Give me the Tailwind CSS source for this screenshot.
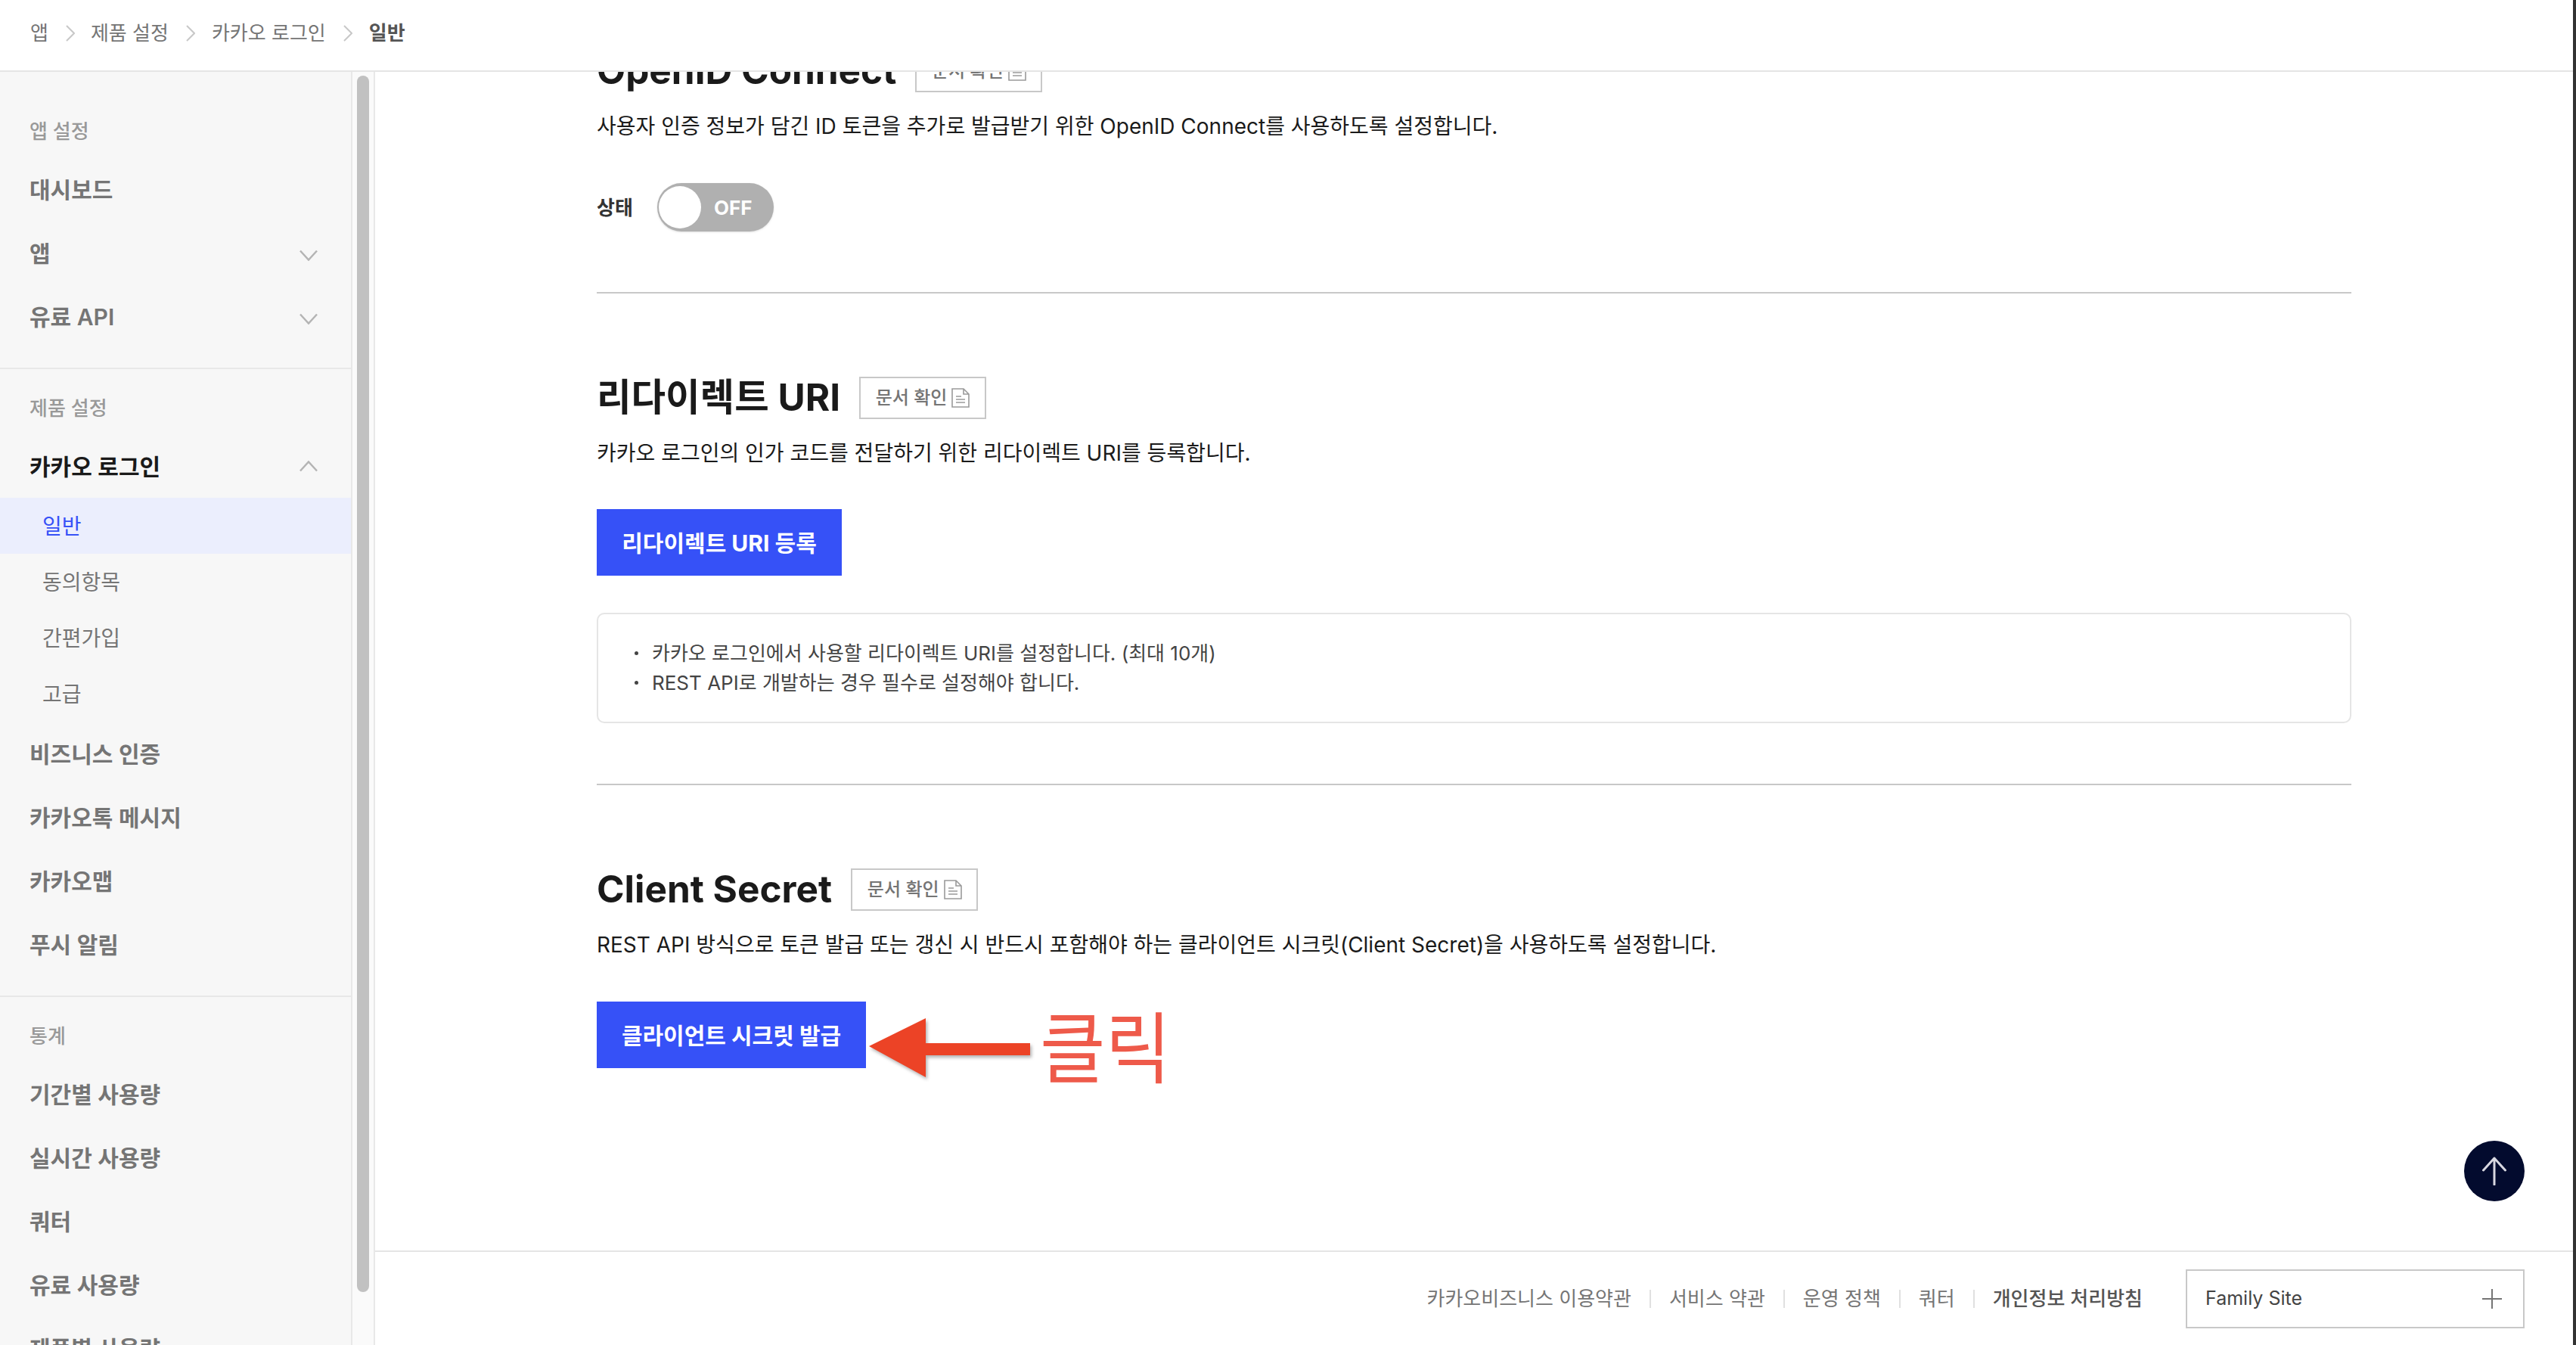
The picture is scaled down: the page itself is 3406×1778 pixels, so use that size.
<!DOCTYPE html>
<html lang="ko">
<head>
  <meta charset="UTF-8">
  <title>카카오 로그인 일반</title>
  <script src="https://cdn.jsdelivr.net/npm/@tailwindcss/browser@4"></script>
</head>
<body class="bg-white">

<div class="w-[3406px] h-[1778px] overflow-hidden flex font-['Inter','Noto_Sans_CJK_KR',sans-serif] text-[#1a1a1a]">
<div class="w-[3402px] h-full flex flex-col">

  <!-- Breadcrumb -->
  <header class="h-[95px] shrink-0 border-b-2 border-[#e5e5e5] flex items-center pl-[40px] pb-[6px] text-[26px] text-[#757575] bg-white relative z-10">
    <span>앱</span>
    <svg class="w-[12px] h-[22px] ml-[23px] mr-[21px]" viewBox="0 0 12 22" fill="none" stroke="#c8c8c8" stroke-width="2"><path d="M1 1l10 10L1 21"/></svg>
    <span>제품 설정</span>
    <svg class="w-[12px] h-[22px] ml-[23px] mr-[22px]" viewBox="0 0 12 22" fill="none" stroke="#c8c8c8" stroke-width="2"><path d="M1 1l10 10L1 21"/></svg>
    <span>카카오 로그인</span>
    <svg class="w-[12px] h-[22px] ml-[23px] mr-[22px]" viewBox="0 0 12 22" fill="none" stroke="#c8c8c8" stroke-width="2"><path d="M1 1l10 10L1 21"/></svg>
    <span class="font-bold text-[#555555]">일반</span>
  </header>

  <div class="flex flex-1 min-h-0">

    <!-- Sidebar -->
    <aside class="w-[464px] shrink-0 bg-[#f7f7f7] overflow-hidden text-[30px] font-semibold text-[#757575]">
      <section class="pt-[57px] pb-[26px] border-b-2 border-[#e8e8e8]">
        <h4 class="h-[40px] pt-[2px] leading-[40px] mb-[16px] pl-[39px] text-[26px] font-medium text-[#999999]">앱 설정</h4>
        <a class="h-[84px] pt-[2px] flex items-center pl-[39px]">대시보드</a>
        <a class="h-[84px] pt-[2px] flex items-center justify-between pl-[39px] pr-[44px]">앱
          <svg class="w-[24px] h-[15px] mt-[4px]" viewBox="0 0 24 15" fill="none" stroke="#b4b4b4" stroke-width="2.5"><path d="M1 1.5l11 12 11-12"/></svg>
        </a>
        <a class="h-[84px] pt-[2px] flex items-center justify-between pl-[39px] pr-[44px]">유료 API
          <svg class="w-[24px] h-[15px] mt-[4px]" viewBox="0 0 24 15" fill="none" stroke="#b4b4b4" stroke-width="2.5"><path d="M1 1.5l11 12 11-12"/></svg>
        </a>
      </section>
      <section class="pt-[30px] pb-[26px] border-b-2 border-[#e8e8e8]">
        <h4 class="h-[40px] pt-[2px] leading-[40px] mb-[16px] pl-[39px] text-[26px] font-medium text-[#999999]">제품 설정</h4>
        <a class="h-[84px] pt-[2px] flex items-center justify-between pl-[39px] pr-[44px] text-[#1a1a1a]">카카오 로그인
          <svg class="w-[24px] h-[15px] -mt-[2px]" viewBox="0 0 24 15" fill="none" stroke="#b4b4b4" stroke-width="2.5"><path d="M1 13.5l11-12 11 12"/></svg>
        </a>
        <ul class="text-[28px] font-normal">
          <li class="h-[74px] pt-[2px] flex items-center pl-[56px] bg-[#ebeefd] text-[#3651f7]">일반</li>
          <li class="h-[74px] pt-[2px] flex items-center pl-[56px]">동의항목</li>
          <li class="h-[74px] pt-[2px] flex items-center pl-[56px]">간편가입</li>
          <li class="h-[74px] pt-[2px] flex items-center pl-[56px]">고급</li>
        </ul>
        <a class="h-[84px] pt-[2px] flex items-center pl-[39px]">비즈니스 인증</a>
        <a class="h-[84px] pt-[2px] flex items-center pl-[39px]">카카오톡 메시지</a>
        <a class="h-[84px] pt-[2px] flex items-center pl-[39px]">카카오맵</a>
        <a class="h-[84px] pt-[2px] flex items-center pl-[39px]">푸시 알림</a>
      </section>
      <section class="pt-[30px]">
        <h4 class="h-[40px] pt-[2px] leading-[40px] mb-[16px] pl-[39px] text-[26px] font-medium text-[#999999]">통계</h4>
        <a class="h-[84px] pt-[2px] flex items-center pl-[39px]">기간별 사용량</a>
        <a class="h-[84px] pt-[2px] flex items-center pl-[39px]">실시간 사용량</a>
        <a class="h-[84px] pt-[2px] flex items-center pl-[39px]">쿼터</a>
        <a class="h-[84px] pt-[2px] flex items-center pl-[39px]">유료 사용량</a>
        <a class="h-[84px] pt-[2px] flex items-center justify-between pl-[39px] pr-[44px]">제품별 사용량
          <svg class="w-[24px] h-[15px] mt-[4px]" viewBox="0 0 24 15" fill="none" stroke="#b4b4b4" stroke-width="2.5"><path d="M1 1.5l11 12 11-12"/></svg>
        </a>
      </section>
    </aside>

    <!-- Sidebar scrollbar -->
    <div class="w-[32px] shrink-0 bg-[#fafafa] border-x-2 border-[#e8e8e8] pl-[6px] pt-[5px]">
      <div class="w-[16px] h-[1608px] rounded-full bg-[#c1c1c1]"></div>
    </div>

    <!-- Main -->
    <main class="flex-1 min-w-0 flex flex-col relative">
      <div class="flex-1 min-h-0 overflow-hidden">
        <div class="w-[2320px] ml-[293px] -mt-[29px]">

          <section class="pb-[80px] border-b-2 border-[#c8c8c8]">
            <div class="flex items-center h-[56px]">
              <h2 class="text-[49.5px] font-bold leading-none">OpenID Connect</h2>
              <a class="ml-[25px] h-[56px] w-[168px] border-2 border-[#c8c8c8] flex items-center justify-center gap-[6px] text-[24px] font-medium text-[#757575]">문서 확인
                <svg class="w-[24px] h-[26px]" viewBox="0 0 24 26" fill="none" stroke="#9a9a9a" stroke-width="1.6"><path d="M1 1h15l7 7v17H1zM16 1v7h7M6 11h7M6 15h12M6 19h12"/></svg>
              </a>
            </div>
            <p class="mt-[25px] text-[28px] leading-[40px]">사용자 인증 정보가 담긴 ID 토큰을 추가로 발급받기 위한 OpenID Connect를 사용하도록 설정합니다.</p>
            <div class="mt-[55px] h-[64px] flex items-center">
              <span class="w-[80px] text-[26px] font-bold text-[#333333]">상태</span>
              <div class="w-[154px] h-[64px] rounded-full bg-[#b0b0b0] flex items-center pl-[2px] shadow-sm">
                <span class="w-[56px] h-[56px] rounded-full bg-white"></span>
                <span class="ml-[17px] text-[26px] font-bold text-white">OFF</span>
              </div>
            </div>
          </section>

          <section class="pt-[110px] pb-[80px] border-b-2 border-[#c8c8c8]">
            <div class="flex items-center h-[56px]">
              <h2 class="text-[49.5px] font-bold leading-none">리다이렉트 URI</h2>
              <a class="ml-[25px] h-[56px] w-[168px] border-2 border-[#c8c8c8] flex items-center justify-center gap-[6px] text-[24px] font-medium text-[#757575]">문서 확인
                <svg class="w-[24px] h-[26px]" viewBox="0 0 24 26" fill="none" stroke="#9a9a9a" stroke-width="1.6"><path d="M1 1h15l7 7v17H1zM16 1v7h7M6 11h7M6 15h12M6 19h12"/></svg>
              </a>
            </div>
            <p class="mt-[25px] text-[28px] leading-[40px]">카카오 로그인의 인가 코드를 전달하기 위한 리다이렉트 URI를 등록합니다.</p>
            <a class="mt-[54px] h-[88px] pt-[2px] w-[324px] bg-[#3651f7] text-white text-[30px] font-bold flex items-center justify-center">리다이렉트 URI 등록</a>
            <ul class="mt-[49px] h-[146px] border-2 border-[#e5e5e5] rounded-[10px] pl-[50px] flex flex-col justify-center text-[26px] leading-[39px] text-[#444444]">
              <li class="relative before:content-[''] before:absolute before:left-[-2px] before:top-[17px] before:w-[5px] before:h-[5px] before:rounded-full before:bg-[#444444] pl-[21px]">카카오 로그인에서 사용할 리다이렉트 URI를 설정합니다. (최대 10개)</li>
              <li class="relative before:content-[''] before:absolute before:left-[-2px] before:top-[17px] before:w-[5px] before:h-[5px] before:rounded-full before:bg-[#444444] pl-[21px]">REST API로 개발하는 경우 필수로 설정해야 합니다.</li>
            </ul>
          </section>

          <section class="pt-[110px]">
            <div class="flex items-center h-[56px]">
              <h2 class="text-[49.5px] font-bold leading-none">Client Secret</h2>
              <a class="ml-[25px] h-[56px] w-[168px] border-2 border-[#c8c8c8] flex items-center justify-center gap-[6px] text-[24px] font-medium text-[#757575]">문서 확인
                <svg class="w-[24px] h-[26px]" viewBox="0 0 24 26" fill="none" stroke="#9a9a9a" stroke-width="1.6"><path d="M1 1h15l7 7v17H1zM16 1v7h7M6 11h7M6 15h12M6 19h12"/></svg>
              </a>
            </div>
            <p class="mt-[25px] text-[28px] leading-[40px]">REST API 방식으로 토큰 발급 또는 갱신 시 반드시 포함해야 하는 클라이언트 시크릿(Client Secret)을 사용하도록 설정합니다.</p>
            <div class="mt-[55px] flex items-center relative">
              <a class="h-[88px] pt-[2px] w-[356px] bg-[#3651f7] text-white text-[30px] font-bold flex items-center justify-center">클라이언트 시크릿 발급</a>
              <!-- annotation drawn over the screenshot -->
              <svg class="absolute left-[357px] top-[18px] w-[220px] h-[84px] drop-shadow-[2px_3px_2px_rgba(0,0,0,0.3)]" viewBox="0 0 220 84" fill="#ec4326"><path d="M3 41L78 4v33h138v16H78v29z"/></svg>
              <span class="absolute left-[586px] top-[3px] text-[94px] leading-[120px] font-normal text-[#ee5a4a] scale-y-110">클릭</span>
            </div>
          </section>
        </div>
      </div>

      <!-- Back to top -->
      <button class="absolute left-[2762px] top-[1413px] w-[80px] h-[80px] rounded-full bg-[#030b2e] flex items-center justify-center">
        <svg class="w-[32px] h-[38px]" viewBox="0 0 32 38" fill="none" stroke="#d8d8e0" stroke-width="3" stroke-linecap="round" stroke-linejoin="round"><path d="M16 37V2M1.5 18L16 2l14.5 16"/></svg>
      </button>

      <!-- Footer -->
      <footer class="h-[125px] shrink-0 border-t-2 border-[#e5e5e5] flex items-center justify-end pr-[64px] text-[26px] text-[#757575]">
        <a>카카오비즈니스 이용약관</a>
        <span class="w-[2px] h-[24px] bg-[#e0e0e0] mx-[24px]"></span>
        <a>서비스 약관</a>
        <span class="w-[2px] h-[24px] bg-[#e0e0e0] mx-[24px]"></span>
        <a>운영 정책</a>
        <span class="w-[2px] h-[24px] bg-[#e0e0e0] mx-[24px]"></span>
        <a>쿼터</a>
        <span class="w-[2px] h-[24px] bg-[#e0e0e0] mx-[24px]"></span>
        <a class="font-medium text-[#555555]">개인정보 처리방침</a>
        <div class="ml-[57px] w-[448px] h-[78px] border-2 border-[#c8c8c8] flex items-center justify-between pl-[24px] pr-[28px] text-[25px] text-[#444444]">
          Family Site
          <svg class="w-[26px] h-[26px]" viewBox="0 0 26 26" stroke="#757575" stroke-width="2"><path d="M13 0v26M0 13h26"/></svg>
        </div>
      </footer>
    </main>
  </div>
</div>

<!-- window edge -->
<div class="w-[4px] h-full bg-[#333333]"></div>
</div>

</body>
</html>
